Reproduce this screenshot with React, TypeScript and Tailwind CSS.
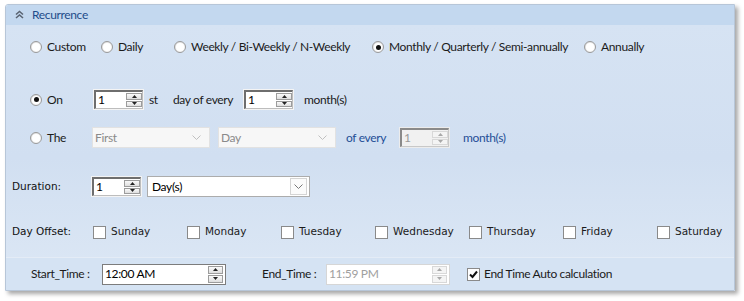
import React from 'react';

const seg = { fontFamily: 'Lato, "Noto Sans", sans-serif' };
const ver = { fontFamily: '"DejaVu Sans", Verdana, sans-serif' };

function Radio({ checked, label, width }: { checked?: boolean; label: string; width: string }) {
  return (
    <div className={`flex shrink-0 items-center whitespace-nowrap ${width}`}>
      <span className="relative flex h-[12px] w-[12px] items-center justify-center rounded-full border border-[#9a9a9a] bg-gradient-to-br from-[#dcdcdc] to-white">
        <span className="absolute inset-[1px] rounded-full bg-white" />
        {checked && <span className="relative h-[5px] w-[5px] rounded-full bg-[#111]" />}
      </span>
      <span className="ml-[5px] text-[12px] text-[#1b1b1b]">{label}</span>
    </div>
  );
}

function Arrows({ disabled, big }: { disabled?: boolean; big?: boolean }) {
  const c = disabled ? '#a8a8a8' : '#222';
  return (
    <div className={`flex h-full ${big ? 'w-[15px]' : 'w-[16px]'} flex-col gap-[1px] py-[1px]`}>
      <div className={`flex flex-1 items-center justify-center border ${disabled ? 'border-[#d8d8d8] bg-[#f4f4f4]' : 'border-[#9c9c9c] bg-gradient-to-b from-[#fafafa] to-[#dedede]'}`}>
        <svg width="5" height="3" viewBox="0 0 5 3"><path d="M0 3 L2.5 0 L5 3 Z" fill={c} /></svg>
      </div>
      <div className={`flex flex-1 items-center justify-center border ${disabled ? 'border-[#d8d8d8] bg-[#f4f4f4]' : 'border-[#9c9c9c] bg-gradient-to-b from-[#fafafa] to-[#dedede]'}`}>
        <svg width="5" height="3" viewBox="0 0 5 3"><path d="M0 0 L2.5 3 L5 0 Z" fill={c} /></svg>
      </div>
    </div>
  );
}

function Spinner({ value, disabled }: { value: string; disabled?: boolean }) {
  return (
    <div className={`flex h-[21px] w-[51px] shrink-0 border ${disabled ? 'border-[#ececec]' : 'border-[#f4f4f4]'}`}>
      <div className={`flex h-full flex-1 items-stretch border-t-2 border-l-2 border-b border-r ${disabled ? 'border-t-[#8a8a8a] border-l-[#8a8a8a] border-b-[#c8c8c8] border-r-[#c8c8c8] bg-[#f1f1f1]' : 'border-t-[#6e6e6e] border-l-[#6e6e6e] border-b-[#bdbdbd] border-r-[#bdbdbd] bg-white'}`}>
        <span className={`flex flex-1 items-center pl-[2px] text-[12px] ${disabled ? 'text-[#9a9a9a]' : 'text-black'}`}>{value}</span>
        <Arrows disabled={disabled} />
      </div>
    </div>
  );
}

function Chevron({ color }: { color: string }) {
  return (
    <svg width="9" height="5" viewBox="0 0 9 5"><path d="M0.5 0.5 L4.5 4.5 L8.5 0.5" fill="none" stroke={color} strokeWidth="1" /></svg>
  );
}

function DisabledCombo({ label }: { label: string }) {
  return (
    <div className="flex h-[21px] w-[118px] shrink-0 items-center justify-between border border-[#e2e2e2] bg-[#f7f7f7] pl-[2px] pr-[8px]">
      <span className="text-[12px] text-[#8a8a8a]">{label}</span>
      <Chevron color="#c0c0c0" />
    </div>
  );
}

function Check({ checked, label }: { checked?: boolean; label: string }) {
  return (
    <div className="flex shrink-0 items-center whitespace-nowrap">
      <span className="flex h-[13px] w-[13px] items-center justify-center border border-[#8a8a8a] bg-white">
        {checked && (
          <svg width="9" height="9" viewBox="0 0 9 9"><path d="M1 4.5 L3.5 7 L8 1.5" fill="none" stroke="#111" strokeWidth="2" /></svg>
        )}
      </span>
      <span className="ml-[4px] text-[12px] text-[#1b1b1b]">{label}</span>
    </div>
  );
}

function TimeBox({ value, disabled }: { value: string; disabled?: boolean }) {
  return (
    <div className={`flex h-[21px] w-[124px] shrink-0 items-stretch border ${disabled ? 'border-[#d6d6d6]' : 'border-[#7c7c7c]'} bg-white pr-[2px]`}>
      <span className={`flex flex-1 items-center pl-[2px] text-[12px] ${disabled ? 'text-[#a0a0a0]' : 'text-black'}`}>{value}</span>
      <Arrows disabled={disabled} big />
    </div>
  );
}

export default function App() {
  const days = ['Sunday', 'Monday', 'Tuesday', 'Wednesday', 'Thursday', 'Friday', 'Saturday'];
  return (
    <div className="h-[301px] w-[744px] bg-white pl-[5px] pt-[4px] tracking-[-0.35px]" style={seg}>
      <div className="flex h-[287px] w-[730px] flex-col overflow-hidden rounded-tl-[3px] border border-[#b7c6d8] shadow-[3px_3px_4px_rgba(0,0,0,0.35)]">
        {/* header */}
        <div className="flex h-[20px] shrink-0 items-center bg-[#c3d8ef] pb-[1px] pl-[9px]">
          <svg width="9" height="9" viewBox="0 0 9 9">
            <path d="M1 4.5 L4.5 1.5 L8 4.5 M1 8 L4.5 5 L8 8" fill="none" stroke="#5a6472" strokeWidth="1.6" />
          </svg>
          <span className="ml-[8px] text-[12px] text-[#1e4c8a]">Recurrence</span>
        </div>

        {/* body */}
        <div className="flex flex-1 flex-col bg-gradient-to-b from-[#d6e3f3] via-[#d1dff1] to-[#dde8f5]">
          <div className="mt-[12px] flex h-[20px] items-center pl-[24px]">
            <Radio label="Custom" width="w-[71px]" />
            <Radio label="Daily" width="w-[73px]" />
            <Radio label="Weekly / Bi-Weekly / N-Weekly" width="w-[198px]" />
            <Radio label="Monthly / Quarterly / Semi-annually" width="w-[212px]" checked />
            <Radio label="Annually" width="w-[100px]" />
          </div>

          <div className="mt-[32px] flex h-[21px] items-center pl-[24px]">
            <Radio label="On" width="w-[63px]" checked />
            <Spinner value="1" />
            <span className="ml-[5px] w-[24px] shrink-0 text-[12px] text-[#1b1b1b]">st</span>
            <span className="w-[70px] shrink-0 text-[12px] text-[#1b1b1b]">day of every</span>
            <Spinner value="1" />
            <span className="ml-[10px] text-[12px] text-[#1b1b1b]">month(s)</span>
          </div>

          <div className="mt-[17px] flex h-[21px] items-center pl-[24px]">
            <Radio label="The" width="w-[62px]" />
            <DisabledCombo label="First" />
            <span className="ml-[8px]" />
            <DisabledCombo label="Day" />
            <span className="ml-[10px] w-[53px] shrink-0 text-[12px] text-[#1f4e96]">of every</span>
            <Spinner value="1" disabled />
            <span className="ml-[13px] text-[12px] text-[#1f4e96]">month(s)</span>
          </div>

          <div className="mt-[28px] flex h-[21px] items-center pl-[6px]">
            <span className="w-[79px] shrink-0 text-[10.5px] tracking-normal text-[#111]" style={ver}>Duration:</span>
            <Spinner value="1" />
            <div className="ml-[5px] flex h-[21px] w-[163px] shrink-0 items-center justify-between border border-[#acacac] bg-white pl-[4px] pr-[2px]">
              <span className="text-[12px] text-black">Day(s)</span>
              <span className="flex h-[17px] w-[17px] items-center justify-center border border-[#d4d4d4] bg-[#fbfbfb]">
                <Chevron color="#777" />
              </span>
            </div>
          </div>

          <div className="mt-[25px] flex h-[20px] items-center pl-[6px] tracking-normal" style={ver}>
            <span className="w-[81px] shrink-0 text-[10.5px] text-[#111]">Day Offset:</span>
            {days.map((d) => (
              <div key={d} className="flex w-[94px] shrink-0 items-center whitespace-nowrap">
                <span className="h-[13px] w-[13px] border border-[#8a8a8a] bg-white" />
                <span className="ml-[5px] text-[10.5px] text-[#1b1b1b]">{d}</span>
              </div>
            ))}
          </div>

          <div className="mt-auto flex h-[33px] items-center border-t border-[#e4ecf6] bg-[#d5e3f3] pl-[25px]">
            <span className="w-[71px] shrink-0 text-[12px] text-[#1b1b1b]">Start_Time :</span>
            <TimeBox value="12:00 AM" />
            <span className="ml-[36px] w-[64px] shrink-0 text-[12px] text-[#1b1b1b]">End_Time :</span>
            <TimeBox value="11:59 PM" disabled />
            <span className="ml-[17px]" />
            <Check label="End Time Auto calculation" checked />
          </div>
        </div>
      </div>
    </div>
  );
}
